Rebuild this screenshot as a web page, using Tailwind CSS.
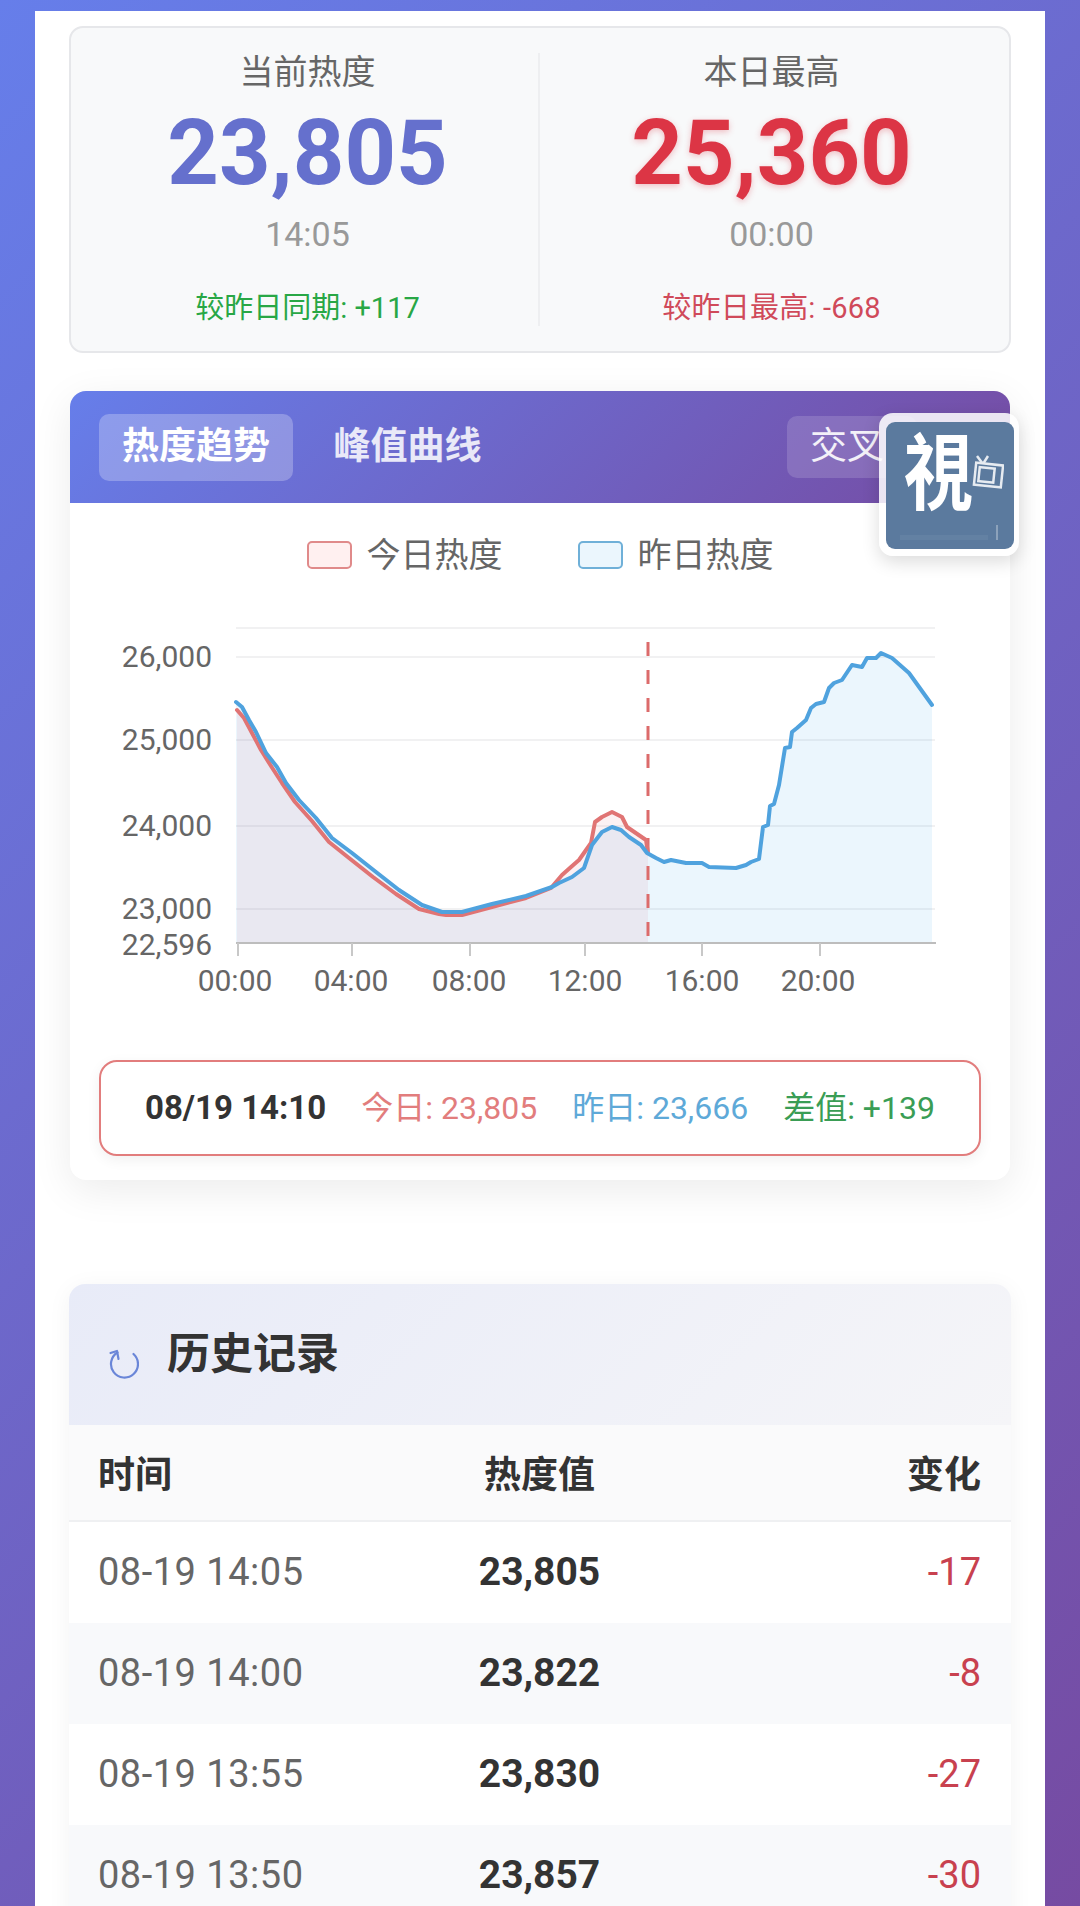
<!DOCTYPE html>
<html lang="zh-CN">
<head>
  <meta charset="UTF-8">
  <meta name="viewport" content="width=device-width,initial-scale=1">
  <title>热度趋势</title>
  <script src="https://cdn.jsdelivr.net/npm/@tailwindcss/browser@4"></script>
</head>
<body class="h-[1906px] overflow-hidden bg-linear-[135deg,#667eea,#764ba2] font-[family-name:Roboto,'Noto_Sans_CJK_SC',sans-serif] text-[#333]">
  <main class="relative mx-[35px] mt-[11px] h-[1895px] bg-white px-[34px] pt-[15px]">

    <!-- stats -->
    <section class="grid h-[327px] grid-cols-2 rounded-[14px] border-2 border-[#e6e7ea] bg-[#f8f9fa] py-[25px]">
      <div class="flex flex-col items-center border-r-2 border-[#eeeff1] pl-[6px]">
        <div class="text-[34px] leading-[38px] text-[#666]">当前热度</div>
        <div class="mt-[13px] text-[90px] leading-[100px] font-bold text-[#6570cd]">23,805</div>
        <div class="mt-[10px] text-[34px] leading-[40px] text-[#999]">14:05</div>
        <div class="mt-[37px] text-[29px] leading-[34px] text-[#28a745]">较昨日同期: +117</div>
      </div>
      <div class="flex flex-col items-center pr-[6px]">
        <div class="text-[34px] leading-[38px] text-[#666]">本日最高</div>
        <div class="mt-[13px] text-[90px] leading-[100px] font-bold text-[#dc3545] [text-shadow:0_2px_6px_rgba(220,53,69,0.3)]">25,360</div>
        <div class="mt-[10px] text-[34px] leading-[40px] text-[#999]">00:00</div>
        <div class="mt-[37px] text-[29px] leading-[34px] tracking-[0.2px] text-[#d04a5a]">较昨日最高: -668</div>
      </div>
    </section>

    <!-- chart -->
    <section class="mx-[1px] mt-[38px] h-[789px] rounded-[16px] bg-white shadow-[0_10px_40px_rgba(0,0,0,0.08)]">
      <div class="flex h-[112px] items-center gap-[19px] rounded-t-[16px] bg-linear-[135deg,#667eea,#764ba2] pl-[29px]">
        <div class="flex h-[67px] w-[194px] items-center justify-center rounded-[10px] bg-white/25 text-[37px] font-bold text-white">热度趋势</div>
        <div class="flex h-[67px] w-[191px] items-center justify-center text-[37px] font-bold text-white/85">峰值曲线</div>
        <div class="ml-[265px] flex h-[62px] w-[130px] items-center rounded-[10px] bg-white/15 pl-[23px] text-[37px] text-white/90">交叉</div>
      </div>

      <div class="flex items-center justify-center pt-[38px] text-[34px] leading-[28px] text-[#666]">
        <span class="h-[28px] w-[45px] rounded-[5px] border-2 border-[#e08a8a] bg-[#fff0f0]"></span>
        <span class="ml-[15px]">今日热度</span>
        <span class="ml-[75px] h-[28px] w-[45px] rounded-[5px] border-2 border-[#6fb0d8] bg-[#ebf6fd]"></span>
        <span class="ml-[15px]">昨日热度</span>
      </div>

      <svg class="mt-[31px] block h-[440px] w-[938px]" viewBox="71 600 938 440" fill="none">
        <g stroke="#f1f1f2" stroke-width="2">
          <path d="M237 628H936M237 657H936M237 740H936M237 826H936M237 909H936"/>
        </g>
        <path id="fill-blue" fill="rgba(54,162,235,0.1)"/>
        <path id="fill-red" fill="rgba(220,80,100,0.08)"/>
        <path d="M237 943H937" stroke="#bdbdbd" stroke-width="2"/>
        <path d="M239 943V956M353 943V956M471 943V956M586 943V956M703 943V956M821 943V956" stroke="#c8c8c8" stroke-width="2"/>
        <path d="M649 642V943" stroke="#dc6b6b" stroke-width="3" stroke-dasharray="14 14"/>
        <path id="line-red" stroke="#e07474" stroke-width="4" stroke-linejoin="round" stroke-linecap="round"/>
        <path id="line-blue" stroke="#4fa2de" stroke-width="4" stroke-linejoin="round" stroke-linecap="round"/>
        <g fill="#666" font-size="30" text-anchor="end">
          <text x="213" y="667">26,000</text>
          <text x="213" y="750">25,000</text>
          <text x="213" y="836">24,000</text>
          <text x="213" y="919">23,000</text>
          <text x="213" y="955">22,596</text>
        </g>
        <g fill="#666" font-size="30" text-anchor="middle">
          <text x="236" y="991">00:00</text>
          <text x="352" y="991">04:00</text>
          <text x="470" y="991">08:00</text>
          <text x="586" y="991">12:00</text>
          <text x="703" y="991">16:00</text>
          <text x="819" y="991">20:00</text>
        </g>
      </svg>

      <div class="mx-[29px] mt-[20px] flex h-[96px] items-center justify-between rounded-[18px] border-2 border-[#e27d7d] bg-white px-[44px] text-[32px] shadow-[0_4px_14px_rgba(0,0,0,0.06)]">
        <span class="text-[33px] font-bold text-[#333]">08/19 14:10</span>
        <span class="text-[#e27d7d]">今日: 23,805</span>
        <span class="text-[#5ea9d8]">昨日: 23,666</span>
        <span class="text-[#3a9d55]">差值: +139</span>
      </div>
    </section>

    <!-- history -->
    <section class="mt-[104px] rounded-t-[16px] bg-white shadow-[0_4px_24px_rgba(0,0,0,0.05)]">
      <div class="flex h-[141px] items-center rounded-t-[16px] bg-linear-[135deg,#e8ebf8,#f5f5f8] pl-[40px]">
        <svg class="mt-[18px] h-[30px] w-[30px]" viewBox="0 0 30 30" fill="none" stroke="#6a86d8" stroke-width="2.2" stroke-linecap="round" stroke-linejoin="round">
          <path d="M8.5 3.5A13.5 13.5 0 1 0 24.5 5"/>
          <path d="M1.5 4L8 2L9.5 10"/>
        </svg>
        <h2 class="ml-[28px] text-[43px] font-bold text-[#333]">历史记录</h2>
      </div>
      <div class="grid h-[97px] grid-cols-3 items-center border-b-2 border-[#eff0f2] bg-[#fafafb] pt-[6px] pr-[30px] pl-[29px] text-[37px] font-bold text-[#333]">
        <div>时间</div>
        <div class="text-center">热度值</div>
        <div class="text-right">变化</div>
      </div>
      <div id="rows"></div>
    </section>

    <!-- floating badge -->
    <div class="absolute top-[402px] left-[844px] h-[143px] w-[140px] rounded-[14px] bg-white/85 p-[7px] pt-[9px] shadow-[0_6px_18px_rgba(0,0,0,0.14)]">
      <div class="relative h-[127px] w-[128px] overflow-hidden rounded-[9px] bg-[#5b7a9e]">
        <span class="absolute top-[9px] left-[18px] origin-left scale-x-[0.82] text-[84px] leading-[88px] font-bold text-white">視</span>
        <svg class="absolute top-[33px] left-[86px] h-[34px] w-[32px]" viewBox="0 0 32 34" fill="none" stroke="#e6ebf1" stroke-width="2.5">
          <path d="M5 1L11 9L16 1"/>
          <rect x="3" y="9" width="27" height="22" transform="rotate(6 16 20)" fill="#5b7a9e"/>
          <rect x="7" y="13" width="15" height="14" transform="rotate(6 16 20)"/>
        </svg>
        <div class="absolute top-[113px] left-[14px] h-[5px] w-[88px] bg-white/5"></div>
        <div class="absolute top-[103px] left-[110px] h-[15px] w-[2px] bg-white/30"></div>
      </div>
    </div>
  </main>

  <script>
    const blue = [[237,702],[243,707],[250,720],[257,732],[267,753],[278,767],[287,783],[300,800],[317,818],[333,838],[353,853],[377,872],[400,890],[423,905],[443,912],[463,912],[493,904],[527,896],[553,887],[560,883],[573,877],[585,868],[593,845],[603,832],[613,827],[622,830],[630,837],[642,845],[648,853],[657,858],[665,862],[672,860],[687,863],[703,863],[710,867],[737,868],[747,865],[752,862],[760,859],[764,827],[769,825],[771,806],[775,804],[780,785],[786,748],[791,747],[793,732],[798,728],[807,720],[812,708],[817,704],[825,702],[830,688],[835,683],[843,680],[853,665],[863,667],[868,658],[877,658],[882,653],[893,658],[910,673],[933,705]];
    const red = [[238,710],[245,718],[253,733],[262,750],[272,766],[283,783],[296,802],[313,821],[330,842],[350,858],[374,877],[397,894],[420,909],[440,914],[447,915],[463,915],[493,907],[527,898],[552,888],[563,875],[572,867],[580,860],[592,843],[596,822],[603,817],[613,812],[623,817],[628,827],[647,840],[649,853]];

    const toPath = pts => pts.map((p, i) => (i ? 'L' : 'M') + p[0] + ' ' + p[1]).join('');
    const toArea = pts => toPath(pts) + `L${pts[pts.length - 1][0]} 943L${pts[0][0]} 943Z`;

    document.getElementById('line-blue').setAttribute('d', toPath(blue));
    document.getElementById('line-red').setAttribute('d', toPath(red));
    document.getElementById('fill-blue').setAttribute('d', toArea(blue));
    document.getElementById('fill-red').setAttribute('d', toArea(red));

    const history = [
      ['08-19 14:05', '23,805', '-17'],
      ['08-19 14:00', '23,822', '-8'],
      ['08-19 13:55', '23,830', '-27'],
      ['08-19 13:50', '23,857', '-30']
    ];
    document.getElementById('rows').innerHTML = history.map((r, i) => `
      <div class="grid h-[101px] grid-cols-3 items-center pr-[30px] pl-[29px] text-[38px] ${i % 2 ? 'bg-[#f8f9fb]' : 'bg-white'}">
        <div class="tracking-[0.5px] text-[#666]">${r[0]}</div>
        <div class="text-center text-[39px] font-bold text-[#333]">${r[1]}</div>
        <div class="text-right text-[#c8414f]">${r[2]}</div>
      </div>`).join('');
  </script>
</body>
</html>
